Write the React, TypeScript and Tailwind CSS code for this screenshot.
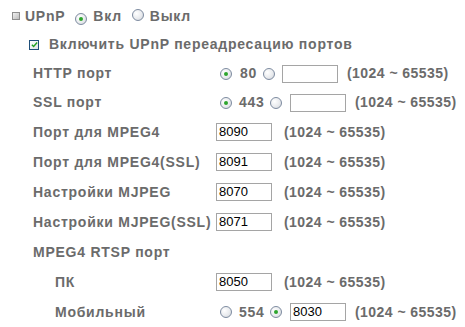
import React from 'react';

function Radio({ checked = false }: { checked?: boolean }) {
  return (
    <span className="inline-flex h-[12px] w-[12px] shrink-0 items-center justify-center rounded-full border border-[#7d8ba0] bg-[radial-gradient(circle_at_35%_35%,#ffffff_0%,#e9ebee_55%,#cdd1d6_100%)]">
      {checked && <span className="h-[4px] w-[4px] rounded-full bg-[#2ea52e]" />}
    </span>
  );
}

function PortInput({ value = '' }: { value?: string }) {
  return (
    <span className="flex h-[18px] w-[56px] shrink-0 items-center border border-[#a5a5a5] bg-white pl-[2px] text-[13px] font-normal tracking-normal text-black">
      {value}
    </span>
  );
}

const Range = () => <span className="tracking-[0.45px]">(1024 ~ 65535)</span>;

export default function App() {
  return (
    <div className="h-[327px] w-[465px] bg-white pt-[2px] font-['Liberation_Sans',Arial,sans-serif] text-[14px] font-bold tracking-[0.75px] text-[#6b6b6b]">
      {/* UPnP on/off */}
      <div className="flex h-[28px] items-center pl-[12px]">
        <span className="mr-[5px] h-[8px] w-[8px] border border-[#8f8f8f] bg-gradient-to-br from-[#f2f2f2] to-[#bdbdbd]" />
        <span>UPnP</span>
        <span className="ml-[10px] mr-[6px]"><Radio checked /></span>
        <span>Вкл</span>
        <span className="ml-[10px] mr-[6px]"><Radio /></span>
        <span>Выкл</span>
      </div>

      <div className="flex h-[29px] items-center pl-[29px]">
        <span className="mr-[10px] flex h-[10px] w-[10px] items-center justify-center border border-[#1f4f7a] bg-gradient-to-br from-white to-[#dfe3e8]">
          <svg viewBox="0 0 8 8" className="h-[7px] w-[7px]">
            <path d="M1 4.2 L3 6.2 L7 1.8" fill="none" stroke="#21a121" strokeWidth="1.6" />
          </svg>
        </span>
        <span>Включить UPnP переадресацию портов</span>
      </div>

      <div className="flex h-[29px] items-center">
        <span className="w-[220px] shrink-0 pl-[33px]">HTTP порт</span>
        <Radio checked />
        <span className="ml-[8px] w-[23px]">80</span>
        <Radio />
        <span className="ml-[7px]"><PortInput /></span>
        <span className="ml-[9px]"><Range /></span>
      </div>

      <div className="flex h-[29px] items-center">
        <span className="w-[220px] shrink-0 pl-[33px]">SSL порт</span>
        <Radio checked />
        <span className="ml-[7px] w-[31px]">443</span>
        <Radio />
        <span className="ml-[8px]"><PortInput /></span>
        <span className="ml-[9px]"><Range /></span>
      </div>

      {[
        ['Порт для MPEG4', '8090'],
        ['Порт для MPEG4(SSL)', '8091'],
        ['Настройки MJPEG', '8070'],
        ['Настройки MJPEG(SSL)', '8071'],
      ].map(([label, val]) => (
        <div key={label} className="flex h-[30px] items-center">
          <span className="w-[216px] shrink-0 whitespace-nowrap pl-[33px]">{label}</span>
          <PortInput value={val} />
          <span className="ml-[12px]"><Range /></span>
        </div>
      ))}

      <div className="flex h-[30px] items-center pl-[33px]">MPEG4 RTSP порт</div>

      <div className="flex h-[30px] items-center">
        <span className="w-[216px] shrink-0 pl-[55px]">ПК</span>
        <PortInput value="8050" />
        <span className="ml-[12px]"><Range /></span>
      </div>

      <div className="flex h-[30px] items-center">
        <span className="w-[220px] shrink-0 pl-[55px]">Мобильный</span>
        <Radio />
        <span className="ml-[7px] w-[31px]">554</span>
        <Radio checked />
        <span className="ml-[8px]"><PortInput value="8030" /></span>
        <span className="ml-[9px]"><Range /></span>
      </div>
    </div>
  );
}
